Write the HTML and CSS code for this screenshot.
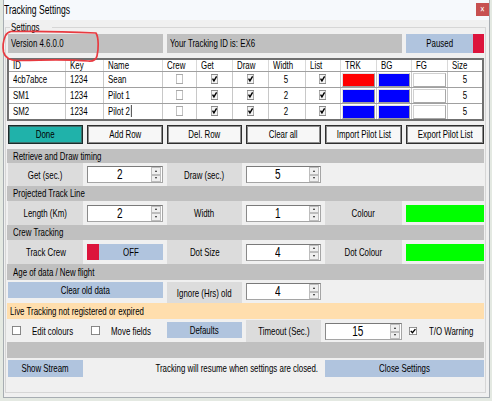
FILE: index.html
```html
<!DOCTYPE html>
<html>
<head>
<meta charset="utf-8">
<link rel="stylesheet" href="styles.css">
</head>
<body>
<div class="window">
  <div class="titlebar">
    <span class="title"><span class="t">Tracking Settings</span></span>
    <span class="close"><span class="t m">&#x2715;</span></span>
  </div>
  <fieldset class="group">
    <legend><span class="t">Settings</span></legend>

    <div class="cols toprow">
      <div class="info span2"><span class="t">Version 4.6.0.0</span></div>
      <div class="info span3"><span class="t">Your Tracking ID is: EX6</span></div>
      <div class="paused"><span class="ptxt"><span class="t m">Paused</span></span><i class="strip"></i></div>
    </div>

    <div class="gridwrap">
      <table class="pilots">
        <thead>
          <tr>
            <th class="w-id"><span class="t">ID</span></th>
            <th class="w-key"><span class="t">Key</span></th>
            <th class="w-name"><span class="t">Name</span></th>
            <th class="w-crew"><span class="t">Crew</span></th>
            <th class="w-get"><span class="t">Get</span></th>
            <th class="w-draw"><span class="t">Draw</span></th>
            <th class="w-width"><span class="t">Width</span></th>
            <th class="w-list"><span class="t">List</span></th>
            <th class="w-trk"><span class="t">TRK</span></th>
            <th class="w-bg"><span class="t">BG</span></th>
            <th class="w-fg"><span class="t">FG</span></th>
            <th class="w-size"><span class="t">Size</span></th>
          </tr>
        </thead>
        <tbody>
          <tr>
            <td><span class="t">4cb7abce</span></td><td><span class="t">1234</span></td><td><span class="t">Sean</span></td>
            <td class="c"><svg class="cb" viewBox="0 0 10 10" preserveAspectRatio="none"><rect x="0.5" y="0.5" width="9" height="9"/></svg></td>
            <td class="c"><svg class="cb on" viewBox="0 0 10 10" preserveAspectRatio="none"><rect x="0.5" y="0.5" width="9" height="9"/><path d="M2.2 4.6 L4.2 6.9 L8 2.4"/></svg></td>
            <td class="c"><svg class="cb on" viewBox="0 0 10 10" preserveAspectRatio="none"><rect x="0.5" y="0.5" width="9" height="9"/><path d="M2.2 4.6 L4.2 6.9 L8 2.4"/></svg></td>
            <td class="c"><span class="t m">5</span></td>
            <td class="c"><svg class="cb on" viewBox="0 0 10 10" preserveAspectRatio="none"><rect x="0.5" y="0.5" width="9" height="9"/><path d="M2.2 4.6 L4.2 6.9 L8 2.4"/></svg></td>
            <td class="sw"><div class="swatch red"></div></td>
            <td class="sw"><div class="swatch blue"></div></td>
            <td class="sw"><div class="swatch white"></div></td>
            <td class="c"><span class="t m">5</span></td>
          </tr>
          <tr>
            <td><span class="t">SM1</span></td><td><span class="t">1234</span></td><td><span class="t">Pilot 1</span></td>
            <td class="c"><svg class="cb" viewBox="0 0 10 10" preserveAspectRatio="none"><rect x="0.5" y="0.5" width="9" height="9"/></svg></td>
            <td class="c"><svg class="cb on" viewBox="0 0 10 10" preserveAspectRatio="none"><rect x="0.5" y="0.5" width="9" height="9"/><path d="M2.2 4.6 L4.2 6.9 L8 2.4"/></svg></td>
            <td class="c"><svg class="cb on" viewBox="0 0 10 10" preserveAspectRatio="none"><rect x="0.5" y="0.5" width="9" height="9"/><path d="M2.2 4.6 L4.2 6.9 L8 2.4"/></svg></td>
            <td class="c"><span class="t m">2</span></td>
            <td class="c"><svg class="cb on" viewBox="0 0 10 10" preserveAspectRatio="none"><rect x="0.5" y="0.5" width="9" height="9"/><path d="M2.2 4.6 L4.2 6.9 L8 2.4"/></svg></td>
            <td class="sw"><div class="swatch blue"></div></td>
            <td class="sw"><div class="swatch blue"></div></td>
            <td class="sw"><div class="swatch white"></div></td>
            <td class="c"><span class="t m">5</span></td>
          </tr>
          <tr class="last">
            <td><span class="t">SM2</span></td><td><span class="t">1234</span></td><td><span class="t">Pilot 2<span class="caret"></span></span></td>
            <td class="c"><svg class="cb" viewBox="0 0 10 10" preserveAspectRatio="none"><rect x="0.5" y="0.5" width="9" height="9"/></svg></td>
            <td class="c"><svg class="cb on" viewBox="0 0 10 10" preserveAspectRatio="none"><rect x="0.5" y="0.5" width="9" height="9"/><path d="M2.2 4.6 L4.2 6.9 L8 2.4"/></svg></td>
            <td class="c"><svg class="cb on" viewBox="0 0 10 10" preserveAspectRatio="none"><rect x="0.5" y="0.5" width="9" height="9"/><path d="M2.2 4.6 L4.2 6.9 L8 2.4"/></svg></td>
            <td class="c"><span class="t m">2</span></td>
            <td class="c"><svg class="cb on" viewBox="0 0 10 10" preserveAspectRatio="none"><rect x="0.5" y="0.5" width="9" height="9"/><path d="M2.2 4.6 L4.2 6.9 L8 2.4"/></svg></td>
            <td class="sw"><div class="swatch blue"></div></td>
            <td class="sw"><div class="swatch blue"></div></td>
            <td class="sw"><div class="swatch white"></div></td>
            <td class="c"><span class="t m">5</span></td>
          </tr>
        </tbody>
      </table>
    </div>

    <div class="cols btnrow">
      <div class="btn done"><span class="t m">Done</span></div>
      <div class="btn"><span class="t m">Add Row</span></div>
      <div class="btn"><span class="t m">Del. Row</span></div>
      <div class="btn"><span class="t m">Clear all</span></div>
      <div class="btn"><span class="t m">Import Pilot List</span></div>
      <div class="btn"><span class="t m">Export Pilot List</span></div>
    </div>

    <div class="section first"><span class="t">Retrieve and Draw timing</span></div>
    <div class="cols row">
      <div class="lbl"><span class="t m">Get (sec.)</span></div>
      <div class="num"><span class="val"><span class="t m">2</span></span><span class="spin"><i class="up"></i><i class="dn"></i></span></div>
      <div class="lbl"><span class="t m">Draw (sec.)</span></div>
      <div class="num"><span class="val"><span class="t m">5</span></span><span class="spin"><i class="up"></i><i class="dn"></i></span></div>
    </div>

    <div class="section"><span class="t">Projected Track Line</span></div>
    <div class="cols row tall">
      <div class="lbl"><span class="t m">Length (Km)</span></div>
      <div class="num"><span class="val"><span class="t m">2</span></span><span class="spin"><i class="up"></i><i class="dn"></i></span></div>
      <div class="lbl"><span class="t m">Width</span></div>
      <div class="num"><span class="val"><span class="t m">1</span></span><span class="spin"><i class="up"></i><i class="dn"></i></span></div>
      <div class="lbl"><span class="t m">Colour</span></div>
      <div class="green"></div>
    </div>

    <div class="section"><span class="t">Crew Tracking</span></div>
    <div class="cols row tall">
      <div class="lbl"><span class="t m">Track Crew</span></div>
      <div class="toggle"><i class="strip"></i><span class="otxt"><span class="t m">OFF</span></span></div>
      <div class="lbl"><span class="t m">Dot Size</span></div>
      <div class="num"><span class="val"><span class="t m">4</span></span><span class="spin"><i class="up"></i><i class="dn"></i></span></div>
      <div class="lbl"><span class="t m">Dot Colour</span></div>
      <div class="green"></div>
    </div>

    <div class="section s4"><span class="t">Age of data / New flight</span></div>
    <div class="cols row age">
      <div class="flat span2 clear"><span class="t m">Clear old data</span></div>
      <div class="lbl ignore"><span class="t m">Ignore (Hrs) old</span></div>
      <div class="num top3"><span class="val"><span class="t m">4</span></span><span class="spin"><i class="up"></i><i class="dn"></i></span></div>
    </div>

    <div class="warnbar"><span class="t">Live Tracking not registered or expired</span></div>

    <div class="cols row opts">
      <label class="chk"><svg class="box" viewBox="0 0 10 10" preserveAspectRatio="none"><rect x="0.5" y="0.5" width="9" height="9"/></svg><span class="t">Edit colours</span></label>
      <label class="chk"><svg class="box" viewBox="0 0 10 10" preserveAspectRatio="none"><rect x="0.5" y="0.5" width="9" height="9"/></svg><span class="t">Move fields</span></label>
      <div class="flat defaults"><span class="t m">Defaults</span></div>
      <div class="lbl"><span class="t m">Timeout (Sec.)</span></div>
      <div class="num top4"><span class="val"><span class="t m">15</span></span><span class="spin"><i class="up"></i><i class="dn"></i></span></div>
      <label class="chk tow"><svg class="box on" viewBox="0 0 10 10" preserveAspectRatio="none"><rect x="0.5" y="0.5" width="9" height="9"/><path d="M2.2 4.8 L4.3 7.2 L8 2.6"/></svg><span class="t">T/O Warning</span></label>
    </div>

    <div class="graybar"></div>

    <div class="cols bottomrow">
      <div class="flat"><span class="t m">Show Stream</span></div>
      <div class="note span3"><span class="t r">Tracking will resume when settings are closed.</span></div>
      <div class="flat span2"><span class="t m">Close Settings</span></div>
    </div>
  </fieldset>
</div>
<svg class="annot" viewBox="0 0 492 401">
  <path d="M11 31.5 C40 31, 75 32, 96 33 C99 38, 98.5 50, 97 56 C96 60, 93 61.5, 88 61 C78 60, 50 59.5, 20 60.5 C10 61, 5 58, 3.5 52 C2.5 46, 3.5 40, 5.5 35.5 C7 32.5, 9 31.8, 11 31.5 Z"/>
</svg>
</body>
</html>
```
FILE: styles.css
```css
* { box-sizing: border-box; }

html, body {
  margin: 0;
  padding: 0;
  overflow: hidden;
}

body {
  width: 492px;
  height: 401px;
  position: relative;
  background: #e4e9e2;
  font-family: "Liberation Sans", Arial, sans-serif;
  font-size: 11px;
  color: #000;
}

/* The reference capture is squashed horizontally: each text run is
   narrowed the same way, while boxes keep their on-screen widths. */
.t {
  display: inline-block;
  white-space: nowrap;
  transform: scaleX(0.716);
  transform-origin: 0 50%;
}

.t.m { transform-origin: 50% 50%; }
.t.r { transform-origin: 100% 50%; }

.window {
  margin-left: 3px;
  width: 487px;
  height: 398px;
  background: #f0f0f0;
  border: 1px solid #a7adb2;
  border-top: none;
}

.titlebar {
  height: 20px;
  background: #f6f9fc;
  display: flex;
  justify-content: space-between;
  align-items: flex-start;
}

.title {
  font-size: 12px;
  line-height: 20px;
}

.close {
  width: 13px;
  height: 13px;
  margin-top: 3px;
  background: #c75050;
  color: #fff;
  font-size: 8px;
  line-height: 13px;
  text-align: center;
}

.group {
  width: 481px;
  margin: 1px 0 0 1px;
  padding: 0 1px 15px;
  border: 1px solid #d6d6d6;
  min-width: 0;
}

.group legend {
  margin-left: 3px;
  padding: 0 1px;
  font-size: 11px;
  line-height: 13px;
}

.cols {
  display: grid;
  grid-template-columns: 75px 76px 75px 75px 77px 1fr;
  column-gap: 4px;
  padding-left: 1px;
}

.span2 { grid-column: span 2; }
.span3 { grid-column: span 3; }

/* top info row */
.toprow { height: 19px; }

.info {
  background: #c0c0c0;
  line-height: 19px;
  padding-left: 3px;
}

.paused {
  display: flex;
  background: #b0c4de;
}

.ptxt {
  flex: 1;
  text-align: center;
  line-height: 19px;
}

.paused .strip {
  width: 11px;
  background: #dc143c;
}

/* pilot grid */
.gridwrap {
  margin-top: 5px;
  border: 2px solid #707070;
  background: #fff;
}

.pilots {
  width: 473px;
  table-layout: fixed;
  border-collapse: collapse;
}

.pilots th {
  height: 11px;
  padding: 0 0 0 4px;
  font-weight: normal;
  text-align: left;
  line-height: 10px;
  border-right: 1px solid #d9d9d9;
  border-bottom: 1px solid #a0a0a0;
  white-space: nowrap;
  overflow: hidden;
}

.pilots td {
  height: 16px;
  padding: 0 0 0 4px;
  line-height: 15px;
  border-right: 1px solid #c8c8c8;
  border-bottom: 1px solid #a0a0a0;
  white-space: nowrap;
  overflow: hidden;
}

.pilots th:last-child,
.pilots td:last-child { border-right: none; }

.pilots tr.last td { border-bottom: none; }

.w-id { width: 56px; }
.w-key { width: 38px; }
.w-name { width: 59px; }
.w-crew { width: 34px; }
.w-get { width: 36px; }
.w-draw { width: 36px; }
.w-width { width: 37px; }
.w-list { width: 35px; }
.w-trk { width: 36px; }
.w-bg { width: 35px; }
.w-fg { width: 36px; }
.w-size { width: 35px; }

.pilots td.c {
  text-align: center;
  padding: 0;
}

.pilots td.sw { padding: 0; }

.caret {
  display: inline-block;
  width: 1px;
  height: 12px;
  margin-left: 1px;
  background: #000;
  vertical-align: -2px;
}

.cb {
  width: 7px;
  height: 10px;
  display: inline-block;
  vertical-align: -1px;
}

.cb rect {
  fill: #fff;
  stroke: #a9a9a9;
  stroke-width: 1;
}

.cb.on rect {
  fill: #f4f4f4;
  stroke: #8a8a8a;
}

.cb path {
  fill: none;
  stroke: #000;
  stroke-width: 1.7;
}

.swatch {
  height: 14px;
  margin: 1px 1px 0;
  border: 1px solid;
  border-color: #e2e2e2 #9e9e9e #9e9e9e #e2e2e2;
}

.swatch.red { background: #ff0000; }
.swatch.blue { background: #0000ff; }
.swatch.white { background: #fff; border-color: #d0d0d0 #a8a8a8 #a8a8a8 #d0d0d0; }

/* buttons */
.btnrow {
  margin-top: 4px;
  height: 19px;
}

.btn {
  background: #f7f7f7;
  border: 1px solid #2e2e2e;
  box-shadow: inset 0 0 0 1px #8c8c8c;
  text-align: center;
  line-height: 17px;
  white-space: nowrap;
}

.btn.done {
  background: #20b2aa;
  border-color: #1b2b2a;
  box-shadow: inset 0 0 0 1px #3b6f6b;
}

/* sections */
.section {
  height: 15px;
  background: #c0c0c0;
  padding-left: 6px;
  line-height: 15px;
}

.section.first {
  margin-top: 5px;
  height: 14px;
  line-height: 14px;
}

.section.s4 {
  height: 16px;
  line-height: 16px;
}

.row { height: 23px; }
.row.tall { height: 24px; }

.lbl {
  background: #dcdcdc;
  display: flex;
  align-items: center;
  justify-content: center;
  white-space: nowrap;
}

.num {
  align-self: center;
  height: 17px;
  display: flex;
  background: #fff;
  border: 1px solid #a5a5a5;
  border-top-color: #7a7a7a;
  border-left-color: #8a8a8a;
}

.num.top3 { align-self: start; margin-top: 3px; }
.num.top4 { align-self: start; margin-top: 4px; }

.num .val {
  flex: 1;
  text-align: center;
  font-size: 14px;
  line-height: 15px;
}

.spin {
  width: 11px;
  display: flex;
  flex-direction: column;
  padding: 0 1px 0 0;
}

.spin i {
  flex: 1;
  position: relative;
  background: #efefef;
  border: 1px solid #bdbdbd;
}

.spin i::after {
  content: "";
  position: absolute;
  left: 50%;
  top: 50%;
  margin-left: -1.5px;
  margin-top: -1px;
  border-left: 1.5px solid transparent;
  border-right: 1.5px solid transparent;
}

.spin .up::after { border-bottom: 2px solid #222; }
.spin .dn::after { border-top: 2px solid #222; }

.green {
  align-self: center;
  height: 17px;
  background: #00ff00;
}

.toggle {
  align-self: center;
  height: 16px;
  display: flex;
  background: #b0c4de;
}

.toggle .strip {
  width: 12px;
  background: #dc143c;
}

.otxt {
  flex: 1;
  text-align: center;
  line-height: 16px;
}

.flat {
  background: #b0c4de;
  text-align: center;
  line-height: 16px;
  height: 16px;
  white-space: nowrap;
}

.row.age { align-items: start; }

.clear { margin-top: 2px; }

.ignore {
  margin-top: 2px;
  height: 21px;
}

.warnbar {
  height: 16px;
  background: #ffdead;
  padding-left: 3px;
  line-height: 16px;
}

.opts { align-items: center; }

.opts .lbl { align-self: stretch; margin-top: 1px; }

.defaults { align-self: start; margin-top: 3px; }

.chk {
  display: flex;
  align-items: center;
  padding-left: 4px;
  white-space: nowrap;
}

.box {
  width: 9px;
  height: 9px;
  margin-right: 11px;
  flex: none;
}

.chk.tow { padding-left: 3px; }
.chk.tow .box { width: 8px; height: 8px; margin-right: 12px; }

.box rect {
  fill: #fff;
  stroke: #7c7c7c;
  stroke-width: 1;
}

.box path {
  fill: none;
  stroke: #000;
  stroke-width: 1.7;
}

.graybar {
  height: 16px;
  background: #c0c0c0;
}

.bottomrow {
  margin-top: 2px;
  height: 17px;
}

.bottomrow .flat {
  height: 17px;
  line-height: 17px;
}

.note {
  text-align: right;
  padding-right: 3px;
  line-height: 17px;
  white-space: nowrap;
}

/* hand-drawn red highlight over the version label */
.annot {
  position: absolute;
  left: 0;
  top: 0;
  width: 492px;
  height: 401px;
  pointer-events: none;
}

.annot path {
  fill: none;
  stroke: #e83a40;
  stroke-width: 1.7;
  stroke-linejoin: round;
}
```
